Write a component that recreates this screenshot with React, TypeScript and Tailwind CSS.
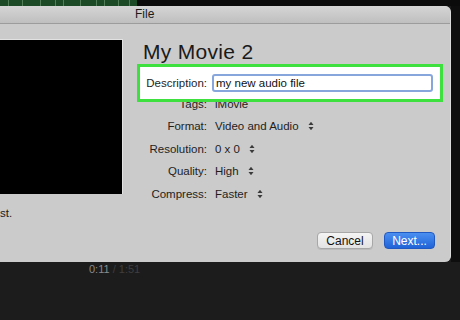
import React from "react";

function Stepper() {
  return (
    <svg width="6" height="10" viewBox="0 0 6 10" className="ml-[9px] shrink-0">
      <path d="M0.5 4 L3 0.8 L5.5 4 Z" fill="#3a3a3a" />
      <path d="M0.5 6 L3 9.2 L5.5 6 Z" fill="#3a3a3a" />
    </svg>
  );
}

function Row({ label, value, stepper = true, h = "h-[22.5px]" }: { label: string; value: string; stepper?: boolean; h?: string }) {
  return (
    <div className={`flex items-center ${h}`}>
      <div className="w-[70px] text-right text-[#1e1e1e]">{label}</div>
      <div className="ml-[8px] flex items-center text-[#1e1e1e]">
        <span>{value}</span>
        {stepper && <Stepper />}
      </div>
    </div>
  );
}

export default function App() {
  const lines = [8, 22, 40, 55, 63, 80, 96, 104, 118, 129];
  return (
    <div className="w-[460px] h-[320px] bg-[#1c1c1c] flex flex-col overflow-hidden font-['Liberation_Sans',Arial,sans-serif] text-[11.5px] leading-[14px]">
      <div className="h-[6px] flex shrink-0">
        <div className="w-[137px] bg-[#1c4a26]">
          <svg width="137" height="6" viewBox="0 0 137 6">
            {lines.map((x) => (
              <rect key={x} x={x} y={0} width={0.8} height={6} fill="#5f8a64" />
            ))}
          </svg>
        </div>
        <div className="flex-1 bg-[#0b0b0b]" />
      </div>
      <div className="flex h-[256px] shrink-0">
        <div className="w-[451px] bg-[#cbcbcb] rounded-tr-[6px] rounded-br-[6px] flex flex-col overflow-hidden border-r border-[#dadada]">
          <div className="h-[18px] shrink-0 bg-gradient-to-b from-[#d5d5d5] to-[#bfbfbf] border-b border-[#9c9c9c] pl-[135px] text-[12px] leading-[17px] text-[#1a1a1a]">
            File
          </div>
          <div className="flex-1 flex flex-col">
            <div className="flex">
              <div className="w-[123px] shrink-0 pt-[15px]">
                <div className="h-[155px] bg-black border-t border-r border-[#e2e2e2]" />
                <div className="mt-[12px] text-[#1a1a1a]">st.</div>
              </div>
              <div className="ml-[14px] pt-[16px] flex-1 flex flex-col">
                <div className="text-[21px] leading-[24px] tracking-[0.3px] text-[#1a1a1a] pl-[6px]">My Movie 2</div>
                <div className="relative z-10 h-[38px] w-[306px] border-[3px] border-[#3ee03f] bg-white flex items-center">
                  <div className="w-[67px] text-right text-[#1e1e1e]">Description:</div>
                  <div className="ml-[5px] w-[221px] h-[18px] border-2 border-[#87a7dc] rounded-[3px] px-[2px] flex items-center text-[#111]">
                    my new audio file
                  </div>
                </div>
                <div className="-mt-[9px] relative z-0">
                  <Row label="Tags:" value="iMovie" stepper={false} h="h-[22px]" />
                </div>
                <Row label="Format:" value="Video and Audio" />
                <Row label="Resolution:" value="0 x 0" />
                <Row label="Quality:" value="High" />
                <Row label="Compress:" value="Faster" />
              </div>
            </div>
            <div className="mt-auto flex justify-end gap-[11px] pr-[15px] pb-[13px]">
              <div className="w-[56px] h-[17px] rounded-[4px] border border-[#a7a7a7] bg-gradient-to-b from-[#f4f4f4] to-[#e3e3e3] flex items-center justify-center text-[12px] text-[#111] shadow-[0_1px_0_rgba(0,0,0,0.08)]">
                Cancel
              </div>
              <div className="w-[51px] h-[17px] rounded-[4px] border border-[#2059c2] bg-gradient-to-b from-[#4b8ff1] to-[#1f63d8] flex items-center justify-center text-[12px] text-white">
                Next...
              </div>
            </div>
          </div>
        </div>
        <div className="flex-1 bg-[#0e0e0e]" />
      </div>
      <div className="pl-[89px] text-[11px] leading-[14px]">
        <span className="text-[#8a8a8a]">0:11</span>
        <span className="text-[#3e3e3e]"> / 1:51</span>
      </div>
    </div>
  );
}
